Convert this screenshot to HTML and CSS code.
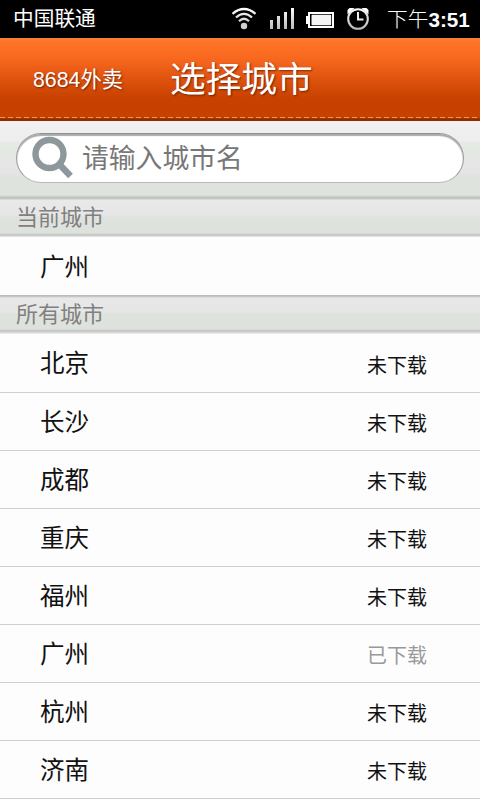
FILE: index.html
```html
<!DOCTYPE html>
<html lang="zh-CN">
<head>
<meta charset="utf-8">
<title>选择城市</title>
<link rel="stylesheet" href="styles.css">
</head>
<body>
<div class="status">
  <span class="carrier">中国联通</span>
  <svg class="sys" width="154" height="38" viewBox="0 0 154 38">
    <defs><linearGradient id="g" x1="0" y1="8" x2="0" y2="29" gradientUnits="userSpaceOnUse"><stop offset="0" stop-color="#fff"/><stop offset="1" stop-color="#bbb"/></linearGradient></defs>
    <g fill="none" stroke="url(#g)" stroke-width="2.300">
      <path d="M6.500 13.800Q18 4.200 29.500 13.800M10 17.500Q18 10.300 26 17.500M13 21.200Q18 16.300 23 21.200"/>
    </g>
    <circle cx="18" cy="26" r="3.200" fill="#d0d0d0"/>
    <path fill="url(#g)" d="M44 20h3v9h-3zM51 16h3v13h-3zM58 12h3v17h-3zM65 8h3v21h-3z"/>
    <path fill="#fff" fill-rule="evenodd" d="M82 12h26v16H82v-4h-2v-8h2zM84 14v12h22V14z"/>
    <rect x="85.500" y="14.800" width="19.700" height="10.400" rx="1" fill="#f4f4f4"/>
    <circle cx="132" cy="19" r="9.800" fill="none" stroke="url(#g)" stroke-width="2.100"/>
    <path d="M121.500 14.500V10l2-2h5zM142.500 14.500V10l-2-2h-5z" fill="#fff"/>
    <path d="M132 12v7.500h5.500" fill="none" stroke="#eee" stroke-width="2"/>
  </svg>
  <span class="time">下午<b>3:51</b></span>
</div>
<header class="header">
  <div class="bar">
    <span class="back">8684外卖</span>
    <h1 class="title">选择城市</h1>
  </div>
  <div class="stitch"></div>
</header>
<div class="search">
  <div class="field">
    <svg class="glass" width="44" height="46" viewBox="0 0 44 46"><circle cx="18.500" cy="19" r="14" fill="none" stroke="#8e979b" stroke-width="6.400"/><path d="M29 30L39.500 41" stroke="#8e979b" stroke-width="6.500"/></svg>
    <span class="placeholder">请输入城市名</span>
  </div>
</div>
<h2 class="section">当前城市</h2>
<div class="row current"><span class="city">广州</span></div>
<h2 class="section all">所有城市</h2>
<div class="list">
  <div class="row"><span class="city">北京</span><span class="state">未下载</span></div>
  <div class="row"><span class="city">长沙</span><span class="state">未下载</span></div>
  <div class="row"><span class="city">成都</span><span class="state">未下载</span></div>
  <div class="row"><span class="city">重庆</span><span class="state">未下载</span></div>
  <div class="row"><span class="city">福州</span><span class="state">未下载</span></div>
  <div class="row"><span class="city">广州</span><span class="state done">已下载</span></div>
  <div class="row"><span class="city">杭州</span><span class="state">未下载</span></div>
  <div class="row"><span class="city">济南</span><span class="state">未下载</span></div>
</div>
</body>
</html>
```
FILE: styles.css
```css
* { box-sizing: border-box; }
body {
  margin: 0;
  width: 480px;
  height: 800px;
  overflow: hidden;
  background: #fdfdfd;
  color: #111;
  font-family: "Liberation Sans", "Noto Sans CJK SC", sans-serif;
}
h1, h2 { margin: 0; font-weight: normal; }
.status {
  height: 38px;
  background: #000;
  color: #fff;
  display: flex;
  padding: 0 9px 0 13px;
  font-size: 21px;
  line-height: 38px;
  white-space: nowrap;
}
.carrier { width: 213px; font-size: 20.7px; line-height: 37px; }
.sys { flex: none; margin-right: 7px; }
.time { font-size: 20.7px; font-weight: 300; line-height: 40px; }
.time b { font-weight: bold; }
.header {
  height: 83px;
  background: linear-gradient(#ff7f38 0, #ff7527 4px, #f8681f 20px, #c94100 60px, #c64000 80px, #8a2d00 81px, #8a2d00 83px);
  color: #fff;
  text-shadow: 1px 1px 2px rgba(70, 20, 0, .7);
}
.bar { height: 79px; display: flex; }
.back { margin-left: 33px; width: 137px; font-size: 21.3px; line-height: 84px; }
.title { font-size: 35.7px; line-height: 85px; }
.stitch {
  height: 1px;
  background: repeating-linear-gradient(90deg, #f59055 0 5px, transparent 5px 8px);
}
.search {
  height: 79px;
  padding: 12px 16px 0;
  background: linear-gradient(#f2f0f0 0, #eeeeee 20px, #e5ebe4 21px, #e3e7e2 35px, #e6e6e6 36px, #e4e4e4 53px, #dee3dd 55px, #dfe3dd 74px, #b9bcb8 77px, #e2e4e1 79px);
}
.field {
  height: 50px;
  border-radius: 25px;
  border: 1px solid;
  border-color: #929292 #999 #b5b8b5;
  background: #fff;
  box-shadow: inset 0 2px 1px #aaa;
  display: flex;
  align-items: center;
}
.glass { margin-left: 14px; margin-right: 7px; flex: none; }
.placeholder { font-size: 26.8px; color: #777; line-height: 46px; padding-top: 1px; }
.section {
  height: 37px;
  padding-left: 16px;
  font-size: 22px;
  line-height: 35px;
  color: #808080;
  background: linear-gradient(#e9e9e9 0, #e6e6e6 15px, #dfe3dd 17px, #dee2dd 33px, #bfc1be 35px, #eeefee 37px);
}
.section.all {
  height: 39px;
  line-height: 39px;
  background: linear-gradient(#b9bcb8 0, #b9bcb8 1px, #e8e8e8 3px, #e6e6e6 17px, #dfe3dd 19px, #dee2dd 34px, #bfc1be 36px, #f0f1f0 39px);
}
.row {
  height: 58px;
  display: flex;
  align-items: center;
  justify-content: space-between;
  padding: 2px 53px 0 40px;
  line-height: 56px;
}
.row.current { padding-top: 3px; }
.list .row { border-bottom: 1px solid #d0d0d0; }
.list .row:first-child { height: 59px; }
.city { font-size: 24.5px; }
.state { font-size: 20px; padding-top: 3px; }
.done { color: #999; }
```
